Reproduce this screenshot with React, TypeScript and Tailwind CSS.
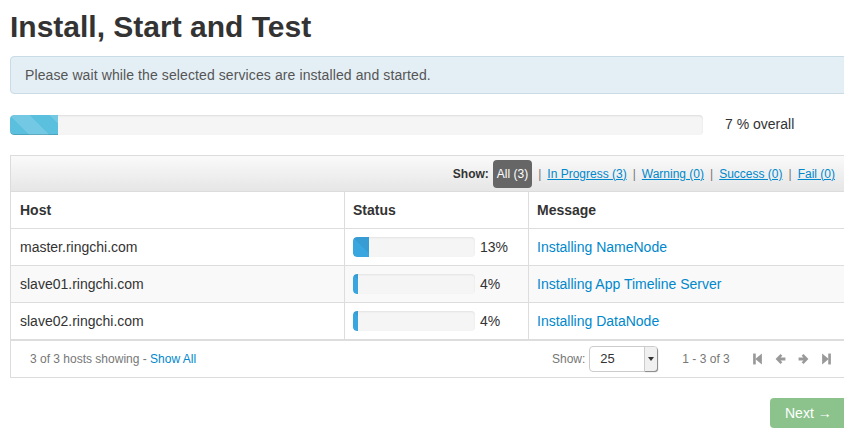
import type { ReactNode } from 'react';

type HostRow = {
  host: string;
  percent: number;
  message: string;
};

const hosts: HostRow[] = [
  { host: 'master.ringchi.com', percent: 13, message: 'Installing NameNode' },
  { host: 'slave01.ringchi.com', percent: 4, message: 'Installing App Timeline Server' },
  { host: 'slave02.ringchi.com', percent: 4, message: 'Installing DataNode' },
];

const filters = ['In Progress (3)', 'Warning (0)', 'Success (0)', 'Fail (0)'];

function Cell({ children, className = '' }: { children: ReactNode; className?: string }) {
  return <div className={`flex h-[36px] items-center ${className}`}>{children}</div>;
}

function PagerIcon({ kind }: { kind: 'first' | 'prev' | 'next' | 'last' }) {
  return (
    <svg width="11" height="12" viewBox="0 0 10 11" className="fill-[#999]">
      {kind === 'first' && (
        <>
          <rect x="1" y="0.5" width="2.4" height="10" />
          <path d="M9 0.5 L9 10.5 L3 5.5 Z" />
        </>
      )}
      {kind === 'last' && (
        <>
          <rect x="6.6" y="0.5" width="2.4" height="10" />
          <path d="M1 0.5 L1 10.5 L7 5.5 Z" />
        </>
      )}
      {kind === 'prev' && <path d="M5 1 L0.5 5.5 L5 10 L6.7 8.4 L5 6.8 H9.5 V4.2 H5 L6.7 2.6 Z" />}
      {kind === 'next' && <path d="M5 1 L9.5 5.5 L5 10 L3.3 8.4 L5 6.8 H0.5 V4.2 H5 L3.3 2.6 Z" />}
    </svg>
  );
}

export default function App() {
  return (
    <div
      className="h-[428px] w-[844px] overflow-hidden bg-white text-[14px] text-[#333]"
      style={{ fontFamily: '"Liberation Sans", Arial, sans-serif' }}
    >
      <div className="w-[860px] pl-[10px]">
        <h2 className="pt-[9px] text-[30px] font-bold leading-[36px] text-[#333]">Install, Start and Test</h2>

        <div className="mt-[11px] flex h-[38px] items-center rounded-[4px] border border-[#c9dce6] bg-[#e4eff5] pl-[14px] tracking-[0.1px] text-[#555]">
          Please wait while the selected services are installed and started.
        </div>

        <div className="mt-[20px] flex items-center">
          <div className="h-[20px] w-[693px] overflow-hidden rounded-[4px] bg-[#f5f5f5] shadow-[inset_0_1px_2px_rgba(0,0,0,0.1)]">
            <div className="h-full w-[48px] rounded-l-[4px] bg-[#5bc0de] bg-[linear-gradient(45deg,rgba(255,255,255,0.15)_25%,transparent_25%,transparent_50%,rgba(255,255,255,0.15)_50%,rgba(255,255,255,0.15)_75%,transparent_75%,transparent)] bg-[length:40px_40px] shadow-[inset_0_-1px_0_rgba(0,0,0,0.15)]" />
          </div>
          <span className="ml-[22px] text-[#333]">7 % overall</span>
        </div>

        <div className="mt-[20px] w-[840px] border border-[#dcdcdc]">
          <div className="flex h-[36px] items-center justify-end border-b border-[#dcdcdc] bg-gradient-to-b from-[#fafafa] to-[#e6e6e6] pr-[14px] text-[12px]">
            <span className="mr-[4px] font-bold text-[#333]">Show:</span>
            <span className="flex h-[28px] items-center rounded-[4px] bg-[#666] px-[4px] text-white">All (3)</span>
            {filters.map((f) => (
              <span key={f} className="flex items-center">
                <span className="mx-[6px] text-[#777]">|</span>
                <a className="text-[#0088cc] underline">{f}</a>
              </span>
            ))}
          </div>

          <div className="grid grid-cols-[333px_184px_1fr] border-b border-[#ddd]">
            <Cell className="pl-[9px] font-bold">Host</Cell>
            <Cell className="border-l border-[#ddd] pl-[8px] font-bold">Status</Cell>
            <Cell className="border-l border-[#ddd] pl-[8px] font-bold">Message</Cell>
          </div>

          {hosts.map((row, i) => (
            <div
              key={row.host}
              className={`grid grid-cols-[333px_184px_1fr] ${i < 2 ? 'border-b border-[#ddd]' : ''} ${i === 1 ? 'bg-[#f9f9f9]' : 'bg-white'}`}
            >
              <Cell className="pl-[9px]">{row.host}</Cell>
              <Cell className="border-l border-[#ddd] pl-[8px]">
                <div className="h-[20px] w-[122px] overflow-hidden rounded-[4px] bg-[#f5f5f5] shadow-[inset_0_1px_2px_rgba(0,0,0,0.08)]">
                  <div
                    className="h-full rounded-l-[4px] bg-[#3aa6e0] bg-[linear-gradient(45deg,rgba(0,0,0,0.06)_25%,transparent_25%,transparent_50%,rgba(0,0,0,0.06)_50%,rgba(0,0,0,0.06)_75%,transparent_75%,transparent)] bg-[length:40px_40px]"
                    style={{ width: `${row.percent}%` }}
                  />
                </div>
                <span className="ml-[5px]">{row.percent}%</span>
              </Cell>
              <Cell className="border-l border-[#ddd] pl-[8px]">
                <a className="text-[#0088cc]">{row.message}</a>
              </Cell>
            </div>
          ))}

          <div className="flex h-[38px] items-center border-t-2 border-[#ddd] text-[12px] text-[#777]">
            <span className="w-[541px] pl-[19px]">
              3 of 3 hosts showing - <a className="text-[#0088cc]">Show All</a>
            </span>
            <span>Show:</span>
            <div className="ml-[4px] flex h-[26px] w-[69px] items-center justify-between rounded-[4px] border border-[#ccc] bg-white pl-[10px] text-[13px] text-[#333]">
              <span>25</span>
              <span className="flex h-[24px] w-[13px] items-center justify-center rounded-r-[3px] border-l border-[#ccc] bg-[#f0f0f0] shadow-[1px_1px_1px_#888]">
                <svg width="6" height="4" viewBox="0 0 6 4" className="fill-[#333]">
                  <path d="M0 0 H6 L3 4 Z" />
                </svg>
              </span>
            </div>
            <span className="ml-[24px]">1 - 3 of 3</span>
            <div className="ml-[22px] flex items-center gap-[12px]">
              <PagerIcon kind="first" />
              <PagerIcon kind="prev" />
              <PagerIcon kind="next" />
              <PagerIcon kind="last" />
            </div>
          </div>
        </div>

        <div className="mt-[20px] flex">
          <button className="ml-[760px] flex h-[30px] w-[80px] items-center rounded-[4px] bg-[#8cc38c] pl-[15px] text-[14px] text-white">
            Next →
          </button>
        </div>
      </div>
    </div>
  );
}
